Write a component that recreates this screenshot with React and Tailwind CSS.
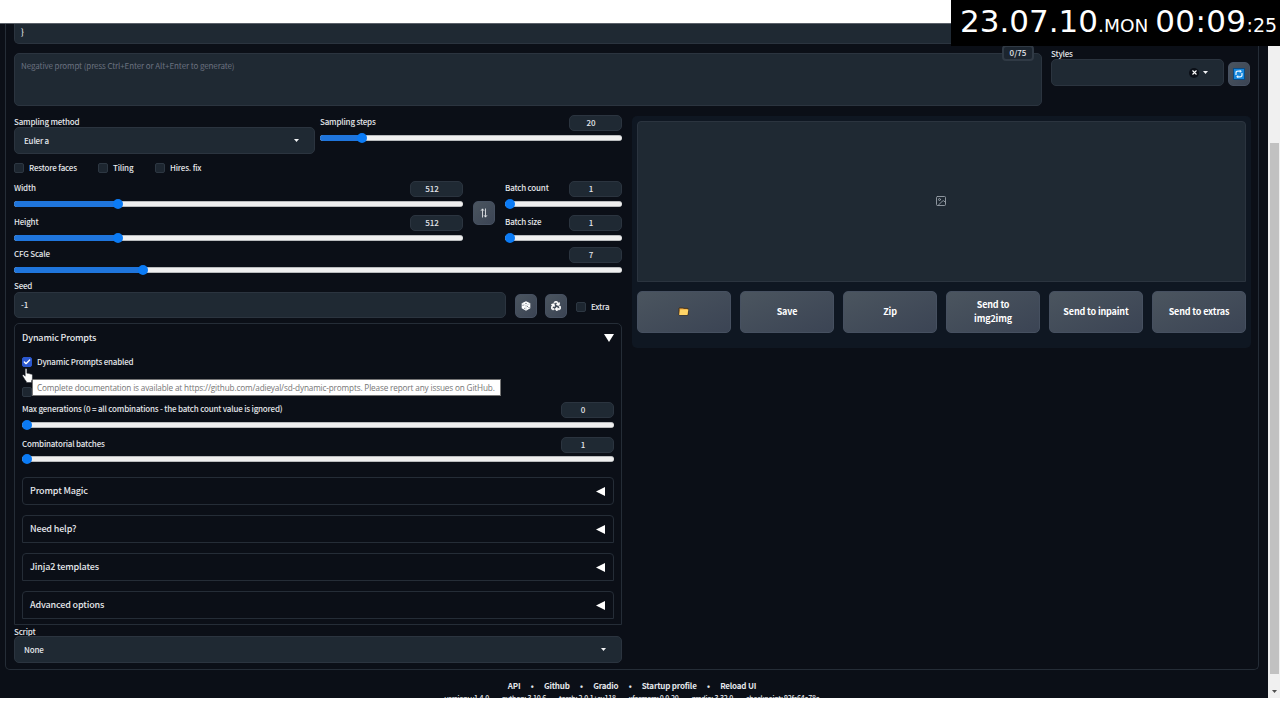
import { Check, Image } from 'lucide-react';
import { FaRecycle } from 'react-icons/fa';

const FIELD = 'bg-[#1f2933] border border-[#2b343f]';
const BUTTON = 'bg-linear-to-br from-[#4b555f] to-[#3b4454] border border-[#465060] text-white';

function Caret() {
  return (
    <svg className="w-[5px] h-[3px]" viewBox="0 0 5 3">
      <path d="M0 0h5L2.5 3z" fill="#f3f4f6" />
    </svg>
  );
}

function Label({ children }) {
  return <div className="h-[13px] leading-[13px] whitespace-nowrap">{children}</div>;
}

function Select({ value, className = '' }) {
  return (
    <div className={`h-[27px] rounded-[5px] flex items-center justify-between pl-[9px] pr-[15px] ${FIELD} ${className}`}>
      <span>{value}</span>
      <Caret />
    </div>
  );
}

function Slider({ label, value, percent, compact }) {
  return (
    <div>
      <div className="h-[15px] flex justify-between">
        <Label>{label}</Label>
        <div className={`w-[53px] h-[16px] rounded-[5px] flex items-center justify-center pr-[9px] tracking-normal ${FIELD}`}>
          {value}
        </div>
      </div>
      <div
        className={`relative h-[6px] rounded-[3px] bg-[#efefef] border-y border-[#b9bbbd] ${compact ? 'mt-[4px]' : 'mt-[5px]'}`}
      >
        <div className="absolute -top-px left-0 h-[6px] rounded-l-[3px] bg-[#1f75dc]" style={{ width: `${percent}%` }} />
        <div
          className="absolute -top-[3px] w-[10px] h-[10px] rounded-full bg-[#0b7bf5]"
          style={{ left: `calc(${percent}% - ${percent / 10}px)` }}
        />
      </div>
    </div>
  );
}

function Checkbox({ label, checked, className = '' }) {
  return (
    <div className={`flex items-center h-[12px] ${className}`}>
      <div
        className={`w-[10px] h-[10px] rounded-[2px] border flex items-center justify-center ${
          checked ? 'bg-[#2b58cf] border-[#2b58cf]' : 'bg-[#1d2630] border-[#2d3742]'
        }`}
      >
        {checked && <Check className="w-[8px] h-[8px] shrink-0 text-white" strokeWidth={4} />}
      </div>
      <span className="ml-[5px] leading-[12px] whitespace-nowrap">{label}</span>
    </div>
  );
}

function ToolButton({ children, className = '' }) {
  return (
    <div className={`w-[22px] h-[24px] rounded-[5px] flex items-center justify-center ${BUTTON} ${className}`}>
      {children}
    </div>
  );
}

function Accordion({ title, className = '' }) {
  return (
    <div
      className={`h-[28px] border border-[#252d37] rounded-t-[4px] flex items-center justify-between pl-[7px] pr-[8px] text-[9px] tracking-[-0.15px] ${className}`}
    >
      <span>{title}</span>
      <svg className="w-[9px] h-[9px]" viewBox="0 0 9 9">
        <path d="M9 0v9L0 4.5z" fill="#fff" />
      </svg>
    </div>
  );
}

function SwapIcon() {
  return (
    <svg className="w-[8px] h-[10px]" viewBox="0 0 8 10" fill="none" stroke="#f3f4f6" strokeWidth="0.8">
      <path d="M2.500 9.500V1M1 2.800 2.500.8 4 2.800M5.500.5V9M4 7.200l1.500 2L7 7.200" />
    </svg>
  );
}

function DiceIcon() {
  return (
    <svg className="w-[10px] h-[10px]" viewBox="0 0 10 10">
      <path d="M5 .3 9.300 2.300V7.200L5 9.700.7 7.200V2.300z" fill="#fff" />
      <path d="M.8 2.500 5 4.600l4.200-2.100M5 4.600v5" fill="none" stroke="#8b929c" strokeWidth="0.4" />
      <g fill="#4a535f">
        <circle cx="5" cy="2.400" r="0.6" />
        <circle cx="2" cy="4.600" r="0.5" />
        <circle cx="3.700" cy="7.300" r="0.5" />
        <circle cx="6.400" cy="5.600" r="0.5" />
        <circle cx="8" cy="6.400" r="0.5" />
      </g>
    </svg>
  );
}

function FolderIcon() {
  return (
    <svg className="w-[11px] h-[9px] -ml-[2px]" viewBox="0 0 11 9">
      <path d="M1 1h4l1 .4h4v6.600H1z" fill="#e9a23b" stroke="#3b2a12" strokeWidth="0.8" />
      <path d="M2.200 2.500h8.200L9.400 8H1.200z" fill="#ffd567" />
    </svg>
  );
}

function RefreshIcon() {
  return (
    <svg className="w-[12px] h-[12px]" viewBox="0 0 12 12">
      <rect x="0.5" y="0.5" width="11" height="11" fill="#1687dd" stroke="#0a4c86" />
      <path d="M3 7V5Q3 3.200 5 3.200h2.200M9 5v2Q9 8.800 7 8.800H4.800" fill="none" stroke="#e8f6ff" strokeWidth="1.2" />
      <path d="M6.800 1.800 8.900 3.300 6.800 4.900zM5.200 7.100 3.100 8.700 5.200 10.200z" fill="#e8f6ff" />
    </svg>
  );
}

function HandCursor() {
  return (
    <svg className="absolute left-[22px] top-[344px] w-[12px] h-[16px]" viewBox="0 0 12 16">
      <path
        d="M3.200 1.200Q3.200.4 4 .4t.9.800v4l1 .1q.7-.2 1.200.4.900-.3 1.400.4 1.600-.4 1.900 1v3.200q0 1.300-.8 2.500v1.800H4.300v-1.200Q2.800 11.700 1.900 10L.5 7.800Q.3 6.900 1.100 6.700q.7-.1 1.300.6l.8.900z"
        fill="#fff"
        stroke="#1b1f26"
        strokeWidth="0.5"
      />
    </svg>
  );
}

function GenerationSettings() {
  return (
    <div className="w-[608px] flex flex-col">
      <div className="flex gap-[5px]">
        <div className="w-[301px]">
          <Label>Sampling method</Label>
          <Select value="Euler a" className="-mt-px" />
        </div>
        <div className="w-[302px]">
          <Slider label="Sampling steps" value="20" percent={12.7} />
        </div>
      </div>

      <div className="flex mt-[8px]">
        <Checkbox label="Restore faces" className="w-[84px]" />
        <Checkbox label="Tiling" className="w-[57px]" />
        <Checkbox label="Hires. fix" />
      </div>

      <div className="flex mt-[7px]">
        <div className="w-[449px] flex flex-col gap-[8px]">
          <Slider label="Width" value="512" percent={22.600} />
          <Slider label="Height" value="512" percent={22.600} />
        </div>
        <ToolButton className="ml-[10px] mt-[20px] mr-[10px]">
          <SwapIcon />
        </ToolButton>
        <div className="w-[117px] flex flex-col gap-[8px]">
          <Slider label="Batch count" value="1" percent={0} />
          <Slider label="Batch size" value="1" percent={0} />
        </div>
      </div>

      <div className="mt-[6px]">
        <Slider label="CFG Scale" value="7" percent={20.700} />
      </div>

      <div className="mt-[6px]">
        <Label>Seed</Label>
        <div className="flex">
          <div className={`w-[492px] h-[26px] rounded-[5px] flex items-center pl-[6px] ${FIELD}`}>-1</div>
          <ToolButton className="ml-[9px] mt-[2px]">
            <DiceIcon />
          </ToolButton>
          <ToolButton className="ml-[8px] mt-[2px]">
            <FaRecycle className="w-[10px] h-[10px]" stroke="#fff" strokeWidth="36" />
          </ToolButton>
          <Checkbox label="Extra" className="ml-[9px] mt-[9px]" />
        </div>
      </div>

      {/* Dynamic prompts extension */}
      <div className="mt-[5px] h-[302px] border border-[#252d37] rounded-t-[5px] px-[7px] flex flex-col">
        <div className="h-[27px] flex items-center justify-between text-[9px] tracking-[-0.15px]">
          <span>Dynamic Prompts</span>
          <svg className="w-[10px] h-[8px]" viewBox="0 0 10 8">
            <path d="M0 0h10L5 8z" fill="#fff" />
          </svg>
        </div>
        <Checkbox label="Dynamic Prompts enabled" checked className="mt-[5px]" />
        <Checkbox label="" className="mt-[18px]" />
        <div className="mt-[4px] flex flex-col gap-[9px]">
          <Slider label="Max generations (0 = all combinations - the batch count value is ignored)" value="0" percent={0} />
          <Slider label="Combinatorial batches" value="1" percent={0} compact />
        </div>
        <Accordion title="Prompt Magic" className="mt-[15px] rounded-b-[4px]" />
        <Accordion title="Need help?" className="mt-[10px]" />
        <Accordion title="Jinja2 templates" className="mt-[10px]" />
        <Accordion title="Advanced options" className="mt-[10px]" />
      </div>

      <Label>Script</Label>
      <Select value="None" className="-mt-[2px]" />
    </div>
  );
}

function Gallery() {
  return (
    <div className="w-[619px] h-[232px] mt-px bg-[#0f1722] rounded-[5px] p-[5px]">
      <div className={`h-[161px] rounded-t-[4px] flex items-center justify-center pb-[2px] pr-px ${FIELD}`}>
        <Image className="w-[12px] h-[12px] text-[#9aa1aa]" strokeWidth={1.8} />
      </div>
      <div className="grid grid-cols-6 gap-[9px] mt-[9px] text-[9px] tracking-[-0.15px] leading-[14px] font-bold text-center">
        {[<FolderIcon key="folder" />, 'Save', 'Zip', 'Send to img2img', 'Send to inpaint', 'Send to extras'].map((item, i) => (
          <div key={i} className={`h-[42px] rounded-[5px] px-[10px] pb-px flex items-center justify-center ${BUTTON}`}>
            {item}
          </div>
        ))}
      </div>
    </div>
  );
}

function Footer() {
  const links = ['API', 'Github', 'Gradio', 'Startup profile', 'Reload UI'];
  const versions = [
    'version: v1.4.0',
    'python: 3.10.6',
    'torch: 2.0.1+cu118',
    'xformers: 0.0.20',
    'gradio: 3.32.0',
    'checkpoint: 92fc64a78a',
  ];
  return (
    <div>
      <div className="mt-[9px] h-[14px] flex justify-center items-center pr-[4px] font-bold">
        {links.map((link, i) => (
          <span key={link} className="flex items-center">
            {i > 0 && <span className="w-[23.5px] text-center">•</span>}
            {link}
          </span>
        ))}
      </div>
      <div className="-mt-px h-[12px] leading-[12px] flex justify-center gap-[13px] pr-[4px] text-[7px] tracking-[-0.26px]">
        {versions.map((v) => (
          <span key={v}>{v}</span>
        ))}
      </div>
    </div>
  );
}

function Scrollbar() {
  return (
    <div className="w-[12px] bg-[#f0f0f0] flex flex-col items-center">
      <div className="w-[9px] h-[531px] mt-[119px] bg-[#c1c1c1]" />
      <svg className="w-[5px] h-[3px] mt-[16px]" viewBox="0 0 5 3">
        <path d="M0 0h5L2.5 3z" fill="#505050" />
      </svg>
    </div>
  );
}

export default function App() {
  return (
    <div className="relative w-[1280px] h-[720px] bg-white overflow-hidden flex flex-col font-['Noto_Sans_CJK_JP',sans-serif] font-medium text-[8px] tracking-[-0.19px] text-[#e5e7eb]">
      <div className="relative mt-[23px] h-[675px] flex overflow-hidden bg-[#0b0f17] border-t border-[#5a6068]">
        <div className="w-[1268px]">
          <div className="ml-[5px] w-[1254px] h-[646px] border border-t-0 border-[#252d37] rounded-b-[5px] pl-[8px] pr-[7px]">
            <div className={`w-[1028px] h-[20px] border-t-0 rounded-b-[5px] pl-[6px] leading-[16px] ${FIELD}`}>{'}'}</div>

            <div className="flex mt-[9px] h-[62px]">
              <div className={`relative w-[1028px] h-[53px] rounded-[5px] pl-[6px] pt-[6px] leading-[12px] font-normal tracking-[-0.1px] text-[#6b7280] ${FIELD}`}>
                Negative prompt (press Ctrl+Enter or Alt+Enter to generate)
                <div className="absolute right-[7px] -top-[9px] w-[32px] h-[16px] rounded-[4px] border-2 border-[#303a45] bg-[#1c252f] text-[#e5e7eb] font-medium leading-[12px] text-center tracking-normal">
                  0/75
                </div>
              </div>
              <div className="ml-[9px] -mt-[6px]">
                <Label>Styles</Label>
                <div className="flex gap-[4px]">
                  <div className={`w-[173px] h-[27px] -mt-px rounded-[5px] flex items-center justify-end gap-[4px] pr-[15px] ${FIELD}`}>
                    <div className="w-[10px] h-[10px] rounded-full bg-[#0b0f17] flex items-center justify-center">
                      <svg className="w-[5px] h-[5px]" viewBox="0 0 5 5">
                        <path d="M.5.5l4 4M4.500.5l-4 4" stroke="#fff" strokeWidth="1.1" />
                      </svg>
                    </div>
                    <Caret />
                  </div>
                  <ToolButton className="mt-[2px]">
                    <RefreshIcon />
                  </ToolButton>
                </div>
              </div>
            </div>

            <div className="flex justify-between">
              <GenerationSettings />
              <Gallery />
            </div>
          </div>
          <Footer />
        </div>
        <Scrollbar />

        <div className="absolute left-[32px] top-[355px] w-[469px] h-[17px] bg-white border border-[#767676] pl-[4px] leading-[15px] font-['Open_Sans',sans-serif] font-normal text-[8.2px] tracking-[-0.15px] text-[#757575] whitespace-nowrap">
          Complete documentation is available at https://github.com/adieyal/sd-dynamic-prompts. Please report any issues on GitHub.
        </div>
        <HandCursor />
      </div>

      {/* Clock overlay */}
      <div className="absolute right-0 top-0 w-[329px] h-[46px] bg-black text-white font-['DejaVu_Sans',sans-serif] font-normal text-[31px] tracking-normal leading-[43px] pl-[9px] whitespace-nowrap [word-spacing:-3px]">
        23.07.10<span className="text-[18.5px]">.MON</span> <span className="tracking-[0.4px]">00:09</span>
        <span className="text-[19px]">:25</span>
      </div>
    </div>
  );
}
